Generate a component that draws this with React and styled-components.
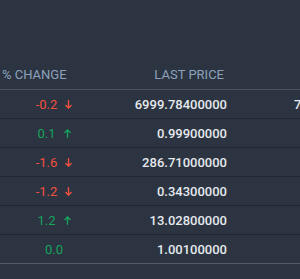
import React from 'react';
import styled, { createGlobalStyle } from 'styled-components';

const Global = createGlobalStyle`
  html, body {
    margin: 0;
    padding: 0;
    background: #2b3440;
    font-family: Roboto, "Liberation Sans", sans-serif;
  }
`;

const Page = styled.div`
  width: 300px;
  height: 279px;
  box-sizing: border-box;
  padding-top: 59px;
  background: #2b3440;
  overflow: hidden;
`;

const Table = styled.div`
  width: 386px;
`;

const HeadRow = styled.div`
  display: grid;
  grid-template-columns: 108px 119px 159px;
  align-items: center;
  height: 30px;
  border-bottom: 1px solid #4a5260;
`;

const HeadCell = styled.div`
  font-size: 13px;
  color: #8da2bd;
  white-space: nowrap;
  text-align: ${(p) => p.$align || 'right'};
  padding: ${(p) => p.$pad || '0'};
`;

const Row = styled.div`
  display: grid;
  grid-template-columns: 108px 119px 159px;
  align-items: center;
  height: 28px;
  border-bottom: 1px solid #222831;

  &:last-child {
    border-bottom-color: #535b68;
  }
`;

const Change = styled.div`
  display: flex;
  justify-content: center;
  align-items: center;
  gap: 8px;
  font-size: 13px;
  color: ${(p) => (p.$down ? '#f2503f' : '#17a35c')};
  white-space: nowrap;
`;

const Price = styled.div`
  font-size: 13px;
  font-weight: 500;
  color: #e6e9ee;
  text-align: right;
  white-space: nowrap;
`;

// third column only peeks in at the right edge of the window
const Peek = styled(Price)`
  text-align: left;
  padding-left: 67px;
  overflow: hidden;
`;

const Arrow = ({ down }) => (
  <svg width="7" height="9" viewBox="0 0 7 9" fill="none" stroke="currentColor" strokeWidth="1.4" strokeLinecap="round" strokeLinejoin="round">
    {down ? (
      <>
        <path d="M3.5 0.8 V8" />
        <path d="M0.9 5.4 L3.5 8 L6.1 5.4" />
      </>
    ) : (
      <>
        <path d="M3.5 8.2 V1" />
        <path d="M0.9 3.6 L3.5 1 L6.1 3.6" />
      </>
    )}
  </svg>
);

const rows = [
  { change: '-0.2', dir: 'down', last: '6999.78400000', high: '7' },
  { change: '0.1', dir: 'up', last: '0.99900000' },
  { change: '-1.6', dir: 'down', last: '286.71000000' },
  { change: '-1.2', dir: 'down', last: '0.34300000' },
  { change: '1.2', dir: 'up', last: '13.02800000' },
  { change: '0.0', dir: null, last: '1.00100000' },
];

const App = () => {
  return (
    <Page>
      <Global />
      <Table>
        <HeadRow>
          <HeadCell $align="left" $pad="0 0 0 2px">% CHANGE</HeadCell>
          <HeadCell $pad="0 3px 0 0">LAST PRICE</HeadCell>
          <HeadCell />
        </HeadRow>
        {rows.map((r, i) => (
          <Row key={i}>
            <Change $down={r.dir === 'down'}>
              <span>{r.change}</span>
              {r.dir && <Arrow down={r.dir === 'down'} />}
            </Change>
            <Price>{r.last}</Price>
            <Peek>{r.high || ''}</Peek>
          </Row>
        ))}
      </Table>
    </Page>
  );
};

export default App;
